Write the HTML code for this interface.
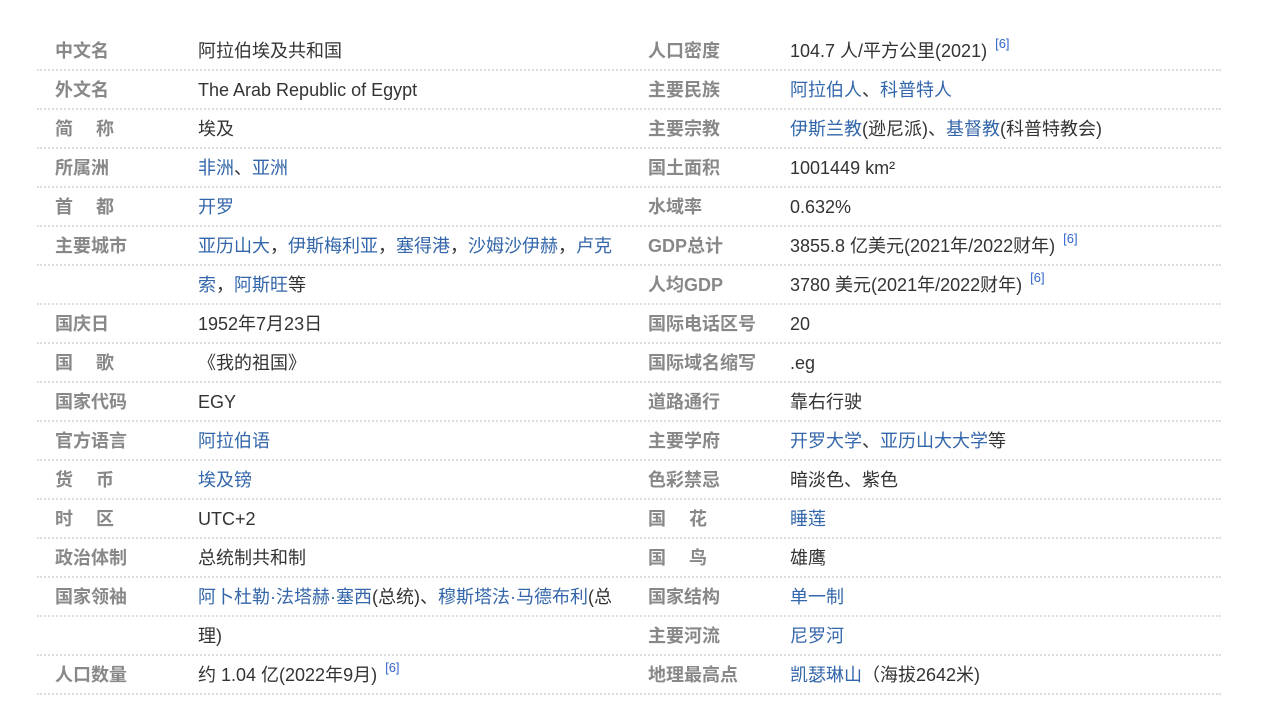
<!DOCTYPE html>
<html><head><meta charset="utf-8"><style>
body{margin:0;background:#fff;width:1264px;height:705px;overflow:hidden;font-family:"Liberation Sans","Noto Sans CJK SC",sans-serif;font-size:18px;color:#333}
.r{position:absolute;left:37px;width:1184px;height:38px;border-bottom:2px dotted #ddd}
.r span{position:absolute;top:1px;line-height:38px;white-space:nowrap}
.l{color:#888;font-weight:bold}
.a{left:18px}.b{left:161px}.c{left:611px}.d{left:753px}
a{color:#3366aa;text-decoration:none}
sup{font-size:13px;color:#3366cc;vertical-align:9px;margin-left:8px;line-height:0}
</style></head><body>
<div class="r" style="top:31px"><span class="l a">中文名</span><span class="b">阿拉伯埃及共和国</span><span class="l c">人口密度</span><span class="d">104.7 人/平方公里(2021)<sup>[6]</sup></span></div>
<div class="r" style="top:70px"><span class="l a">外文名</span><span class="b">The Arab Republic of Egypt</span><span class="l c">主要民族</span><span class="d"><a>阿拉伯人</a>、<a>科普特人</a></span></div>
<div class="r" style="top:109px"><span class="l a">简&emsp;&nbsp;称</span><span class="b">埃及</span><span class="l c">主要宗教</span><span class="d"><a>伊斯兰教</a>(逊尼派)、<a>基督教</a>(科普特教会)</span></div>
<div class="r" style="top:148px"><span class="l a">所属洲</span><span class="b"><a>非洲</a>、<a>亚洲</a></span><span class="l c">国土面积</span><span class="d">1001449 km²</span></div>
<div class="r" style="top:187px"><span class="l a">首&emsp;&nbsp;都</span><span class="b"><a>开罗</a></span><span class="l c">水域率</span><span class="d">0.632%</span></div>
<div class="r" style="top:226px"><span class="l a">主要城市</span><span class="b"><a>亚历山大</a>，<a>伊斯梅利亚</a>，<a>塞得港</a>，<a>沙姆沙伊赫</a>，<a>卢克</a></span><span class="l c">GDP总计</span><span class="d">3855.8 亿美元(2021年/2022财年)<sup>[6]</sup></span></div>
<div class="r" style="top:265px"><span class="b"><a>索</a>，<a>阿斯旺</a>等</span><span class="l c">人均GDP</span><span class="d">3780 美元(2021年/2022财年)<sup>[6]</sup></span></div>
<div class="r" style="top:304px"><span class="l a">国庆日</span><span class="b">1952年7月23日</span><span class="l c">国际电话区号</span><span class="d">20</span></div>
<div class="r" style="top:343px"><span class="l a">国&emsp;&nbsp;歌</span><span class="b">《我的祖国》</span><span class="l c">国际域名缩写</span><span class="d">.eg</span></div>
<div class="r" style="top:382px"><span class="l a">国家代码</span><span class="b">EGY</span><span class="l c">道路通行</span><span class="d">靠右行驶</span></div>
<div class="r" style="top:421px"><span class="l a">官方语言</span><span class="b"><a>阿拉伯语</a></span><span class="l c">主要学府</span><span class="d"><a>开罗大学</a>、<a>亚历山大大学</a>等</span></div>
<div class="r" style="top:460px"><span class="l a">货&emsp;&nbsp;币</span><span class="b"><a>埃及镑</a></span><span class="l c">色彩禁忌</span><span class="d">暗淡色、紫色</span></div>
<div class="r" style="top:499px"><span class="l a">时&emsp;&nbsp;区</span><span class="b">UTC+2</span><span class="l c">国&emsp;&nbsp;花</span><span class="d"><a>睡莲</a></span></div>
<div class="r" style="top:538px"><span class="l a">政治体制</span><span class="b">总统制共和制</span><span class="l c">国&emsp;&nbsp;鸟</span><span class="d">雄鹰</span></div>
<div class="r" style="top:577px"><span class="l a">国家领袖</span><span class="b"><a>阿卜杜勒·法塔赫·塞西</a>(总统)、<a>穆斯塔法·马德布利</a>(总</span><span class="l c">国家结构</span><span class="d"><a>单一制</a></span></div>
<div class="r" style="top:616px"><span class="b">理)</span><span class="l c">主要河流</span><span class="d"><a>尼罗河</a></span></div>
<div class="r" style="top:655px"><span class="l a">人口数量</span><span class="b">约 1.04 亿(2022年9月)<sup>[6]</sup></span><span class="l c">地理最高点</span><span class="d"><a>凯瑟琳山</a>（海拔2642米)</span></div>
</body></html>
